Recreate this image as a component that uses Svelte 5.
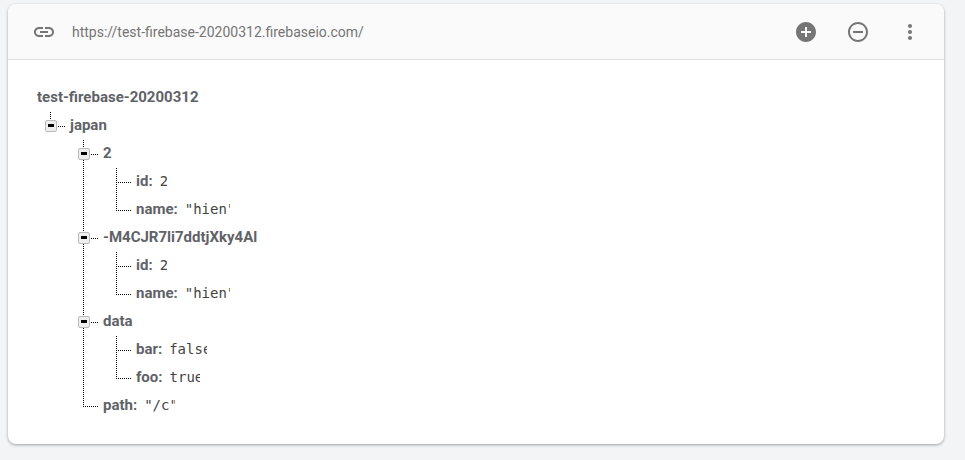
<script>
  const tree = [
    {
      key: 'japan',
      children: [
        { key: '2', children: [{ key: 'id', value: '2' }, { key: 'name', value: '"hien"' }] },
        { key: '-M4CJR7li7ddtjXky4Al', children: [{ key: 'id', value: '2' }, { key: 'name', value: '"hien"' }] },
        { key: 'data', children: [{ key: 'bar', value: 'false' }, { key: 'foo', value: 'true' }] },
        { key: 'path', value: '"/c"' }
      ]
    }
  ];
</script>

{#snippet nodes(items)}
  <ul class="children">
    {#each items as item}
      <li class="node">
        <div class="row">
          {#if item.children}
            <span class="toggle"><span class="minus"></span></span>
            <span class="stub short"></span>
            <span class="key">{item.key}</span>
          {:else}
            <span class="stub long"></span>
            <span class="key">{item.key}:</span>
            <span class="value" style="width: {item.value.length * 7.6}px">{item.value}</span>
          {/if}
        </div>
        {#if item.children}
          {@render nodes(item.children)}
        {/if}
      </li>
    {/each}
  </ul>
{/snippet}

<div class="page">
  <section class="card">
    <header class="bar">
      <svg class="icon link" viewBox="0 0 24 24" width="24" height="24" aria-hidden="true">
        <path d="M3.9 12c0-1.71 1.39-3.1 3.1-3.1h4V7H7c-2.76 0-5 2.24-5 5s2.24 5 5 5h4v-1.9H7c-1.71 0-3.1-1.39-3.1-3.1zM8 13h8v-2H8v2zm9-6h-4v1.9h4c1.71 0 3.1 1.39 3.1 3.1s-1.39 3.1-3.1 3.1h-4V17h4c2.76 0 5-2.24 5-5s-2.24-5-5-5z" />
      </svg>
      <span class="url">https://test-firebase-20200312.firebaseio.com/</span>
      <div class="actions">
        <svg class="icon" viewBox="0 0 24 24" width="24" height="24" aria-hidden="true">
          <path d="M12 2C6.48 2 2 6.48 2 12s4.48 10 10 10 10-4.48 10-10S17.52 2 12 2zm5 11h-4v4h-2v-4H7v-2h4V7h2v4h4v2z" />
        </svg>
        <svg class="icon" viewBox="0 0 24 24" width="24" height="24" aria-hidden="true">
          <path d="M7 11v2h10v-2H7zm5-9C6.48 2 2 6.48 2 12s4.48 10 10 10 10-4.48 10-10S17.52 2 12 2zm0 18c-4.41 0-8-3.59-8-8s3.59-8 8-8 8 3.59 8 8-3.59 8-8 8z" />
        </svg>
        <svg class="icon" viewBox="0 0 24 24" width="24" height="24" aria-hidden="true">
          <path d="M12 8c1.1 0 2-.9 2-2s-.9-2-2-2-2 .9-2 2 .9 2 2 2zm0 2c-1.1 0-2 .9-2 2s.9 2 2 2 2-.9 2-2-.9-2-2-2zm0 6c-1.1 0-2 .9-2 2s.9 2 2 2 2-.9 2-2-.9-2-2-2z" />
        </svg>
      </div>
    </header>
    <div class="tree">
      <div class="row root"><span class="key">test-firebase-20200312</span></div>
      {@render nodes(tree)}
    </div>
  </section>
</div>

<style>
  :global(body) {
    background: #f3f4f6;
    font-family: Roboto, "Liberation Sans", sans-serif;
  }
  .page {
    padding: 4px 0 16px 8px;
  }
  .card {
    width: 936px;
    height: 440px;
    box-sizing: border-box;
    background: #fff;
    border-radius: 8px;
    box-shadow: 0 1px 3px rgba(0, 0, 0, 0.35);
    overflow: hidden;
  }
  .bar {
    height: 56px;
    box-sizing: border-box;
    display: flex;
    align-items: center;
    padding: 0 22px 0 24px;
    background: #fafafa;
    border-bottom: 1px solid #ddd;
  }
  .icon {
    fill: #757575;
    display: block;
    flex: none;
  }
  .url {
    margin-left: 16px;
    font-size: 14px;
    color: #757575;
  }
  .actions {
    margin-left: auto;
    display: flex;
    gap: 28px;
  }
  .tree {
    padding: 23px 0 0 29px;
  }
  .row {
    height: 28px;
    display: flex;
    align-items: center;
    font-size: 15px;
    line-height: 28px;
  }
  .key {
    font-weight: 700;
    color: #5f6368;
  }
  .value {
    margin-left: 7px;
    font-family: "DejaVu Sans Mono", "Liberation Mono", monospace;
    font-size: 14px;
    color: #444;
    overflow: hidden;
    white-space: nowrap;
  }
  .children {
    list-style: none;
    margin: 0;
    padding: 0 0 0 33px;
  }
  .node {
    position: relative;
  }
  .node::before {
    content: "";
    position: absolute;
    left: -20px;
    top: 0;
    bottom: 0;
    width: 1px;
    background: repeating-linear-gradient(to bottom, transparent 0 1px, #000 1px 2px);
  }
  .node:last-child::before {
    bottom: auto;
    height: 15px;
  }
  .row .stub {
    position: absolute;
    right: 100%;
    top: 15px;
    margin-right: 5px;
    height: 1px;
    background: repeating-linear-gradient(to right, #000 0 1px, transparent 1px 2px);
  }
  .stub.long {
    width: 15px;
  }
  .stub.short {
    width: 7px;
  }
  .toggle {
    position: absolute;
    left: -25px;
    top: 9px;
    z-index: 1;
    width: 12px;
    height: 12px;
    box-sizing: border-box;
    display: flex;
    align-items: center;
    justify-content: center;
    background: #eee;
    border: 1px solid #bbb;
    border-radius: 2px;
  }
  .minus {
    width: 6px;
    height: 3px;
    margin-bottom: 1px;
    background: #000;
  }
</style>
